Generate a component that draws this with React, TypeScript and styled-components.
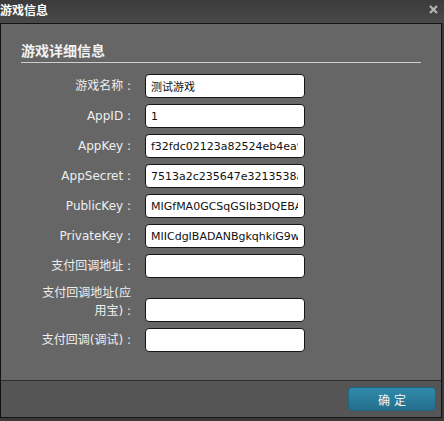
import React from "react";
import styled, { createGlobalStyle } from "styled-components";

const Global = createGlobalStyle`
  html, body { margin: 0; padding: 0; }
  body {
    background: #3a3a3a;
    width: 444px;
    height: 421px;
    overflow: hidden;
    font-family: "DejaVu Sans", "Noto Sans CJK SC", sans-serif;
  }
`;

const Dialog = styled.div`
  width: 444px;
  height: 421px;
  display: flex;
  flex-direction: column;
`;

const TitleBar = styled.div`
  height: 23px;
  flex: none;
  display: flex;
  align-items: flex-start;
  justify-content: space-between;
  background: linear-gradient(#3b3b3b, #494949);
`;

const Title = styled.div`
  font-family: "Noto Sans CJK SC", sans-serif;
  font-weight: bold;
  font-size: 12px;
  line-height: 19px;
  color: #ffffff;
`;

const Close = styled.button`
  border: 0;
  background: none;
  padding: 0;
  margin: 5px 6px 0 0;
  width: 9px;
  height: 9px;
  display: flex;
  cursor: pointer;
`;

const Frame = styled.div`
  width: 442px;
  height: 395px;
  box-sizing: border-box;
  border: 1px solid #121212;
  display: flex;
  flex-direction: column;
  flex: none;
`;

const Body = styled.div`
  flex: 1;
  background: #666666;
  padding: 16px 20px 0 20px;
`;

const SectionTitle = styled.h2`
  margin: 0;
  font-family: "Noto Sans CJK SC", sans-serif;
  font-size: 14px;
  font-weight: bold;
  line-height: 20px;
  color: #f2f2f2;
  padding-bottom: 2px;
  border-bottom: 1px solid #cfcfcf;
`;

const Form = styled.div`
  display: grid;
  grid-template-columns: 95px 160px;
  column-gap: 14px;
  row-gap: 6px;
  margin: 11px 0 0 15px;
`;

const Label = styled.label<{ $tall?: boolean }>`
  font-family: "DejaVu Sans", "Noto Sans CJK SC", sans-serif;
  font-size: 12px;
  line-height: 18px;
  color: #eeeeee;
  text-align: right;
  align-self: ${(p) => (p.$tall ? "start" : "center")};
  padding-bottom: ${(p) => (p.$tall ? "2px" : "0")};
`;

const Field = styled.input`
  box-sizing: border-box;
  width: 160px;
  height: 24px;
  align-self: end;
  border: 1px solid #161616;
  border-radius: 4px;
  background: #ffffff;
  padding: 0 6px 0 5px;
  font-family: "DejaVu Sans", "Noto Sans CJK SC", sans-serif;
  font-size: 11px;
  color: #111111;
  outline: none;
`;

const Footer = styled.div`
  height: 36px;
  flex: none;
  background: #555555;
  border-top: 1px solid #2e2e2e;
  display: flex;
  align-items: center;
  justify-content: flex-end;
  padding-right: 5px;
`;

const OkButton = styled.button`
  width: 88px;
  height: 24px;
  box-sizing: border-box;
  border: 1px solid #1f6580;
  border-radius: 4px;
  background: linear-gradient(#2f8aab, #256f8c);
  color: #f4f4f4;
  font-family: "Noto Sans CJK SC", sans-serif;
  font-size: 12px;
  letter-spacing: 4px;
  padding: 0 0 0 4px;
  cursor: pointer;
`;

const rows: { label: string; value: string; tall?: boolean }[] = [
  { label: "游戏名称 :", value: "测试游戏" },
  { label: "AppID :", value: "1" },
  { label: "AppKey :", value: "f32fdc02123a82524eb4ea9c1d8e7f60" },
  { label: "AppSecret :", value: "7513a2c235647e3213538a0d4f6b2c19" },
  { label: "PublicKey :", value: "MIGfMA0GCSqGSIb3DQEBAQUAA4GNADCBiQKBgQ" },
  { label: "PrivateKey :", value: "MIICdgIBADANBgkqhkiG9w0BAQEFAASCAmAwggJc" },
  { label: "支付回调地址 :", value: "" },
  { label: "支付回调地址(应用宝) :", value: "", tall: true },
  { label: "支付回调(调试) :", value: "" },
];

export default function App() {
  return (
    <>
      <Global />
      <Dialog>
        <TitleBar>
          <Title>游戏信息</Title>
          <Close aria-label="关闭">
            <svg width="9" height="9" viewBox="0 0 9 9">
              <path d="M1 1L8 8M8 1L1 8" stroke="#b4b4b4" strokeWidth="2.2" />
            </svg>
          </Close>
        </TitleBar>
        <Frame>
          <Body>
            <SectionTitle>游戏详细信息</SectionTitle>
            <Form>
              {rows.map((r) => (
                <React.Fragment key={r.label}>
                  <Label $tall={r.tall}>{r.label}</Label>
                  <Field readOnly value={r.value} />
                </React.Fragment>
              ))}
            </Form>
          </Body>
          <Footer>
            <OkButton>确定</OkButton>
          </Footer>
        </Frame>
      </Dialog>
    </>
  );
}
